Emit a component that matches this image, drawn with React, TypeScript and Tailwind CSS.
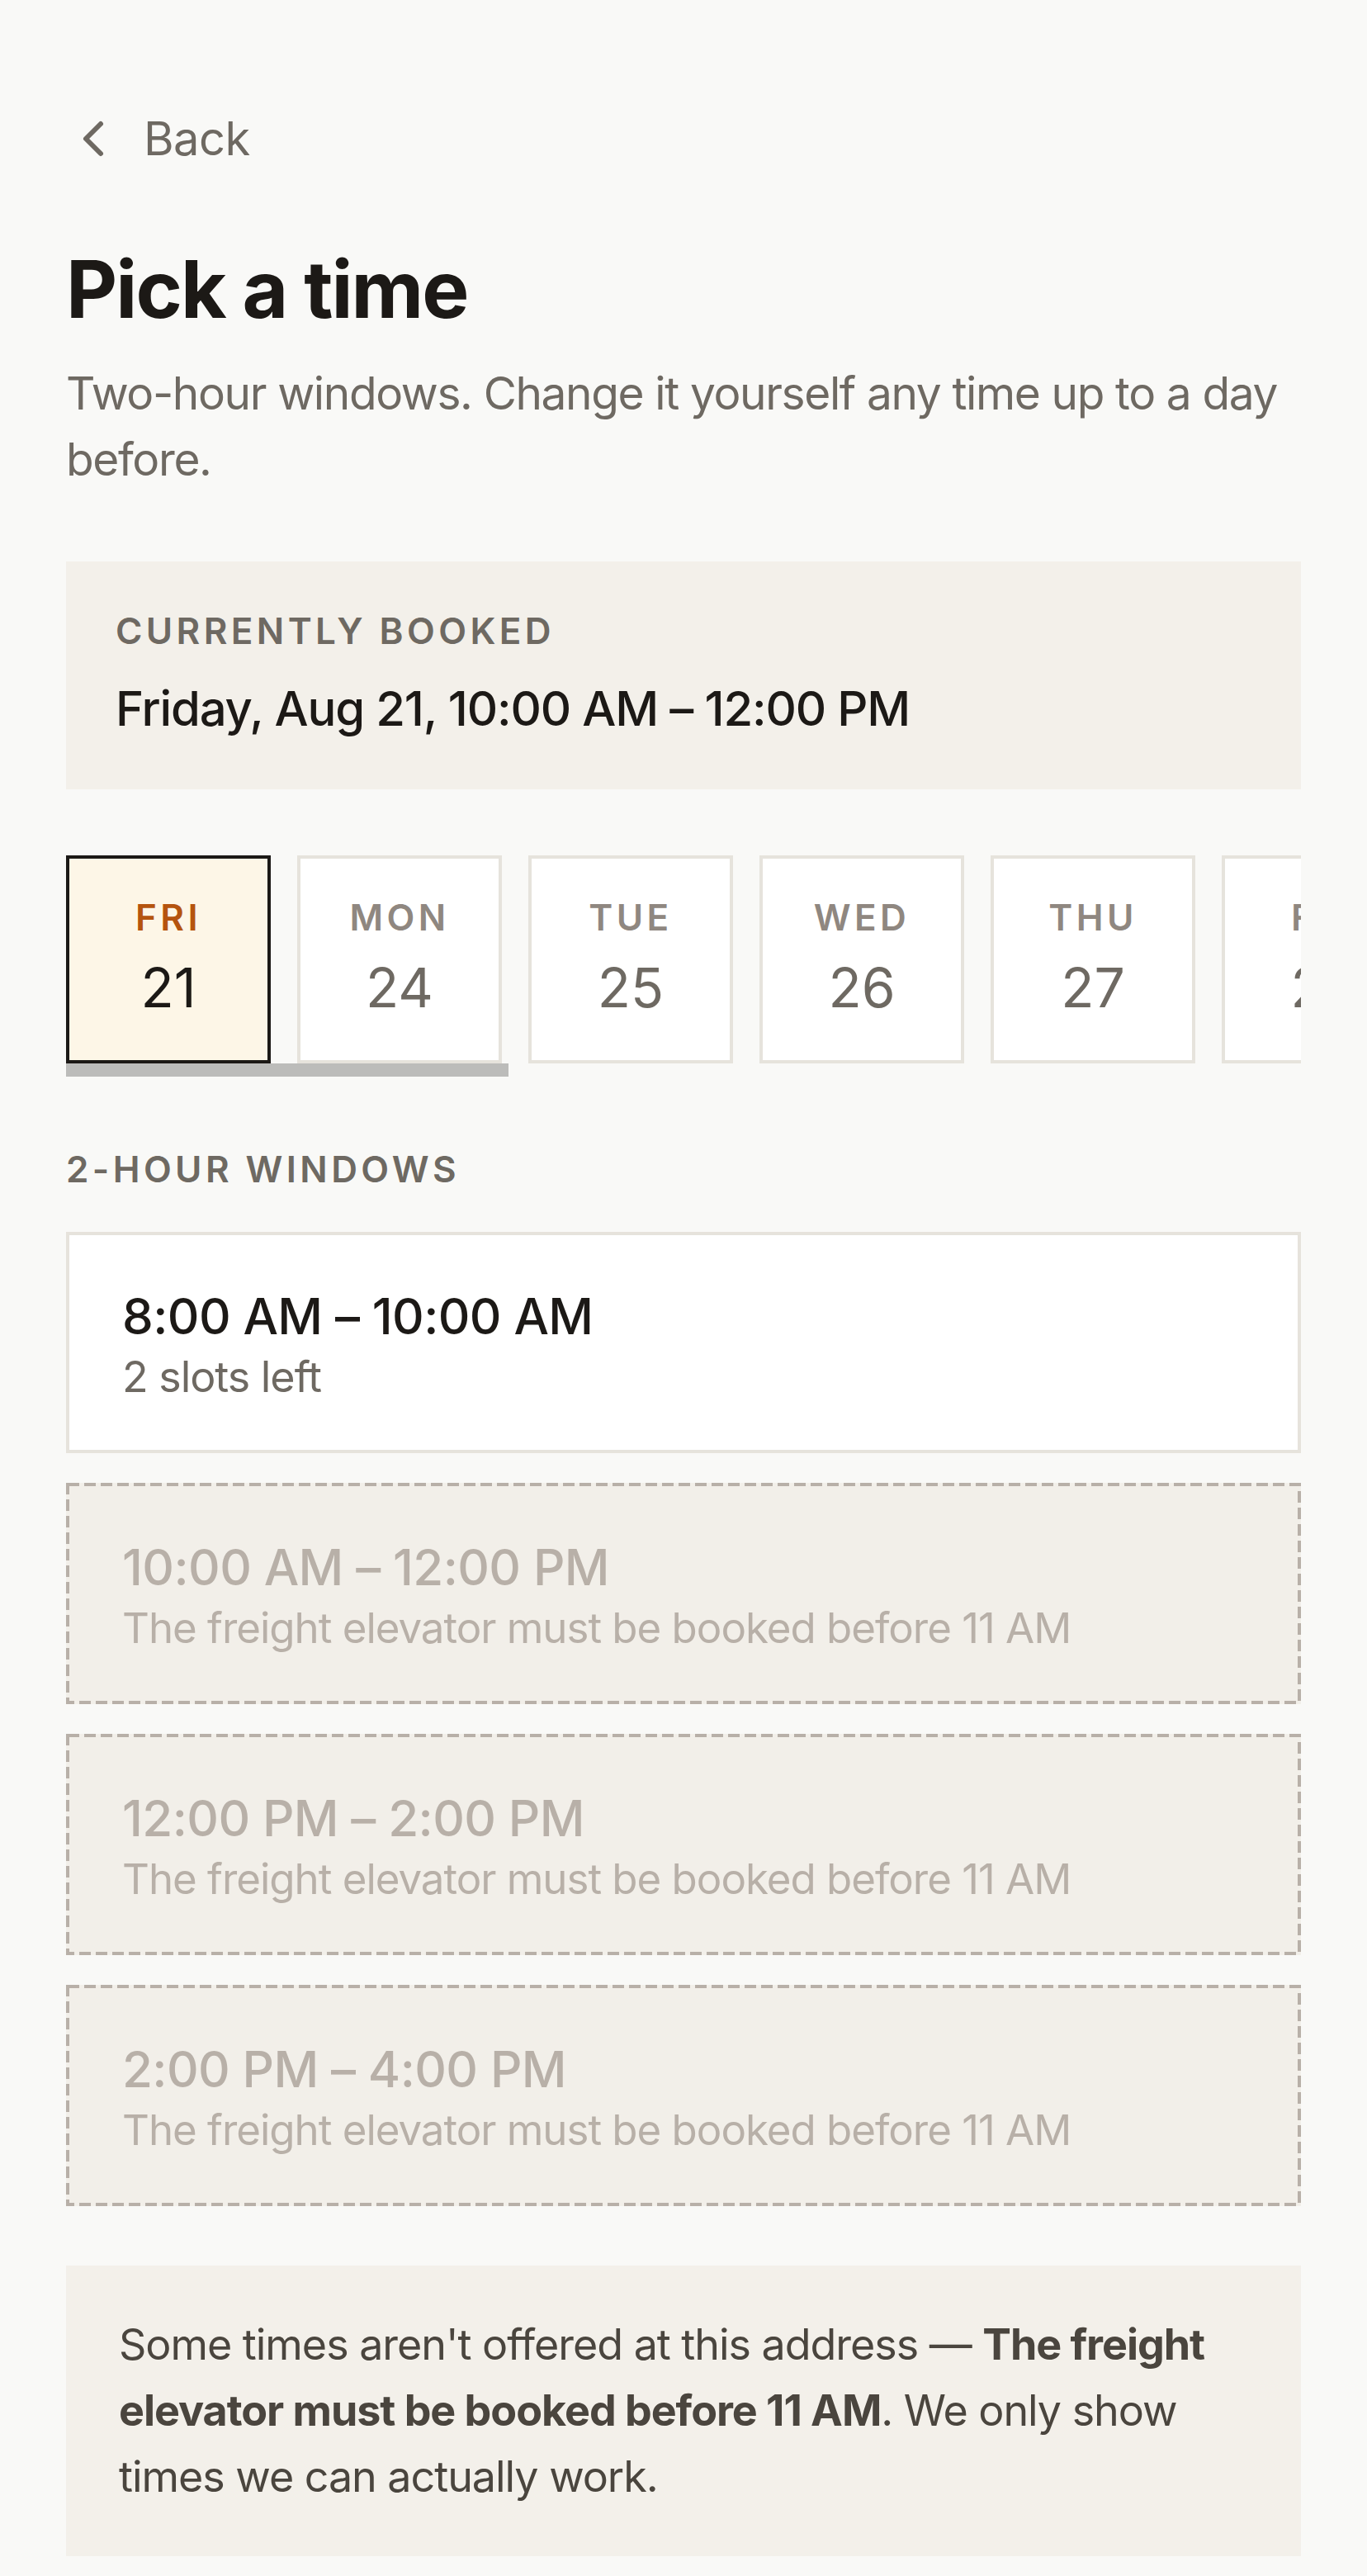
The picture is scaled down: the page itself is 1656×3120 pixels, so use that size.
import React, { useState } from 'react';

interface Day {
  dow: string;
  num: number;
}

interface Slot {
  time: string;
  note: string;
  available: boolean;
}

const days: Day[] = [
  { dow: 'FRI', num: 21 },
  { dow: 'MON', num: 24 },
  { dow: 'TUE', num: 25 },
  { dow: 'WED', num: 26 },
  { dow: 'THU', num: 27 },
  { dow: 'FRI', num: 28 },
  { dow: 'MON', num: 31 },
  { dow: 'TUE', num: 1 },
  { dow: 'WED', num: 2 },
  { dow: 'THU', num: 3 },
  { dow: 'FRI', num: 4 },
  { dow: 'MON', num: 7 },
  { dow: 'TUE', num: 8 },
  { dow: 'WED', num: 9 },
  { dow: 'THU', num: 10 },
];

const slots: Slot[] = [
  { time: '8:00 AM – 10:00 AM', note: '2 slots left', available: true },
  { time: '10:00 AM – 12:00 PM', note: 'The freight elevator must be booked before 11 AM', available: false },
  { time: '12:00 PM – 2:00 PM', note: 'The freight elevator must be booked before 11 AM', available: false },
  { time: '2:00 PM – 4:00 PM', note: 'The freight elevator must be booked before 11 AM', available: false },
];

const App: React.FC = () => {
  const [selected, setSelected] = useState(0);

  return (
    <div className="min-h-screen bg-[#f9f9f7] px-[80px] pt-[128px] pb-[40px] font-[Inter,'Liberation_Sans',sans-serif] text-[#1c1916]">
      <button className="flex h-[80px] items-center gap-[46px] pl-[16px] text-[56px] leading-[80px] tracking-[-0.01em] text-[#6e6962]">
        <svg width="32" height="48" viewBox="0 0 32 48" fill="none" stroke="currentColor" strokeWidth="6" strokeLinecap="round" strokeLinejoin="round">
          <path d="M26 6 8 24l18 18" />
        </svg>
        <span>Back</span>
      </button>

      <h1 className="mt-[90px] text-[96px] leading-[104px] font-bold tracking-[-0.02em]">Pick a time</h1>
      <p className="mt-[34px] text-[55px] leading-[80px] tracking-[-0.025em] text-[#6e6962]">
        Two-hour windows. Change it yourself any time up to a day before.
      </p>

      <div className="mt-[84px] bg-[#f3f0ea] px-[60px] pt-[54px] pb-[58px]">
        <div className="text-[44px] leading-[60px] font-semibold tracking-[0.1em] text-[#6e6962]">CURRENTLY BOOKED</div>
        <div className="mt-[24px] text-[58px] leading-[80px] font-medium tracking-[-0.02em]">Friday, Aug 21, 10:00 AM – 12:00 PM</div>
      </div>

      <div className="mt-[80px]">
        <div className="flex gap-[32px] overflow-hidden">
          {days.map((d, i) => {
            const on = i === selected;
            return (
              <button
                key={i}
                onClick={() => setSelected(i)}
                className={
                  on
                    ? 'flex h-[252px] w-[248px] shrink-0 flex-col items-center justify-center gap-[17px] border-4 border-[#1c1916] bg-[#fdf6e7] pb-[5px]'
                    : 'flex h-[252px] w-[248px] shrink-0 flex-col items-center justify-center gap-[17px] border-4 border-[#e6e3dc] bg-white pb-[5px]'
                }
              >
                <span
                  className={
                    on
                      ? 'text-[44px] leading-[56px] font-semibold tracking-[0.1em] text-[#b5540f]'
                      : 'text-[44px] leading-[56px] font-semibold tracking-[0.1em] text-[#8f8780]'
                  }
                >
                  {d.dow}
                </span>
                <span className={on ? 'text-[66px] leading-[80px] text-[#1c1916]' : 'text-[66px] leading-[80px] text-[#6e6962]'}>
                  {d.num}
                </span>
              </button>
            );
          })}
        </div>
        <div className="h-[16px] w-[536px] bg-[#bcbcba]" />
      </div>

      <div className="mt-[82px] text-[44px] leading-[60px] font-semibold tracking-[0.1em] text-[#6e6962]">2-HOUR WINDOWS</div>

      <div className="mt-[46px] flex flex-col gap-[36px]">
        {slots.map((s) =>
          s.available ? (
            <button key={s.time} className="border-4 border-[#e6e3dc] bg-white px-[64px] pt-[60px] pb-[52px] text-left">
              <div className="text-[60px] leading-[76px] font-medium tracking-[-0.01em] text-[#1c1916]">{s.time}</div>
              <div className="text-[52px] leading-[72px] tracking-[-0.02em] text-[#6e6962]">{s.note}</div>
            </button>
          ) : (
            <div key={s.time} className="relative bg-[#f2efe9] px-[68px] pt-[64px] pb-[56px] text-[#b8b0a8]">
              <svg className="pointer-events-none absolute inset-0 h-full w-full" fill="none">
                <rect x="2" y="2" className="h-[calc(100%-4px)] w-[calc(100%-4px)]" stroke="#b8b0a8" strokeWidth="4" strokeDasharray="14 6" />
              </svg>
              <div className="text-[60px] leading-[76px] font-medium tracking-[-0.01em]">{s.time}</div>
              <div className="text-[51px] leading-[72px] tracking-[-0.02em]">{s.note}</div>
            </div>
          )
        )}
      </div>

      <div className="mt-[72px] bg-[#f3f0ea] px-[64px] py-[56px] text-[52px] leading-[80px] tracking-[-0.02em] text-[#4a453e]">
        Some times aren't offered at this address — <strong className="font-bold">The freight elevator must be booked before 11 AM</strong>. We
        only show times we can actually work.
      </div>
    </div>
  );
};

export default App;
